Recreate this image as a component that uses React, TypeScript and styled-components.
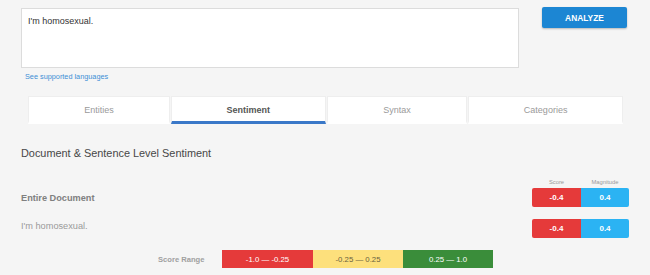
import React from "react";
import styled, { createGlobalStyle } from "styled-components";

const Global = createGlobalStyle`
  html, body { margin: 0; padding: 0; background: #f5f5f5; }
  body { font-family: "Liberation Sans", Arial, sans-serif; width: 650px; height: 275px; overflow: hidden; }
  * { box-sizing: border-box; }
`;

const Page = styled.div`
  display: flex;
  flex-direction: column;
  padding: 7px 21px 0 21px;
`;

const TopRow = styled.div`
  display: flex;
  align-items: flex-start;
`;

const InputCol = styled.div`
  display: flex;
  flex-direction: column;
  width: 498px;
  padding-top: 1px;
`;

const TextBox = styled.div`
  height: 60px;
  background: #fff;
  border: 1px solid #dcdcdc;
  padding: 7px 6px;
  font-size: 9px;
  color: #333;
`;

const Link = styled.a`
  font-size: 7.3px;
  color: #3d8fd6;
  margin: 4px 0 0 4px;
  text-decoration: none;
`;

const AnalyzeButton = styled.button`
  margin-left: 23px;
  width: 85px;
  height: 21px;
  border: none;
  border-radius: 2px;
  background: #1c86d3;
  color: #fff;
  font-family: "Liberation Sans", Arial, sans-serif;
  font-weight: bold;
  font-size: 8.4px;
  box-shadow: 0 1px 2px rgba(0, 0, 0, 0.25);
  padding: 0;
`;

const Tabs = styled.div`
  display: flex;
  margin: 15px 6px 0 7px;
  gap: 1px;
  height: 28px;
`;

const Tab = styled.div<{ $active?: boolean; $w: number }>`
  width: ${(p) => p.$w}px;
  background: #fff;
  border: 1px solid #eeeeee;
  border-bottom: 3px solid ${(p) => (p.$active ? "#3a78c8" : "#fff")};
  display: flex;
  align-items: center;
  justify-content: center;
  padding-top: 1px;
  font-size: 9px;
  color: ${(p) => (p.$active ? "#555" : "#9a9a9a")};
  font-weight: ${(p) => (p.$active ? "bold" : "normal")};
`;

const Heading = styled.div`
  margin-top: 23px;
  font-size: 10.9px;
  color: #474747;
  line-height: 13px;
`;

const ScoreHeader = styled.div`
  display: flex;
  justify-content: flex-end;
  margin-top: 18px;
  height: 9px;
`;

const HeaderCell = styled.div<{ $w: number }>`
  width: ${(p) => p.$w}px;
  text-align: center;
  font-size: 5.8px;
  color: #9a9a9a;
  line-height: 9px;
`;

const Row = styled.div<{ $mt: number }>`
  display: flex;
  justify-content: space-between;
  align-items: center;
  margin-top: ${(p) => p.$mt}px;
  height: 19px;
`;

const RowLabel = styled.div<{ $bold?: boolean; $dy?: number }>`
  font-size: 9.2px;
  font-weight: ${(p) => (p.$bold ? "bold" : "normal")};
  color: ${(p) => (p.$bold ? "#808080" : "#9a9a9a")};
  position: relative;
  top: ${(p) => p.$dy ?? 0}px;
`;

const Boxes = styled.div`
  display: flex;
  border-radius: 2px;
  overflow: hidden;
`;

const ScoreBox = styled.div<{ $bg: string; $w: number }>`
  width: ${(p) => p.$w}px;
  height: 19px;
  background: ${(p) => p.$bg};
  color: #fff;
  font-weight: bold;
  font-size: 8px;
  display: flex;
  align-items: center;
  justify-content: center;
`;

const RangeRow = styled.div`
  display: flex;
  align-items: center;
  margin-top: 12px;
  margin-left: 137px;
`;

const RangeLabel = styled.div`
  font-size: 7.6px;
  font-weight: bold;
  color: #a0a0a0;
  width: 64px;
`;

const RangeBar = styled.div<{ $bg: string; $fg: string; $w: number }>`
  width: ${(p) => p.$w}px;
  height: 18px;
  background: ${(p) => p.$bg};
  color: ${(p) => p.$fg};
  font-size: 7.8px;
  display: flex;
  align-items: center;
  justify-content: center;
`;

const RED = "#e53a3a";
const BLUE = "#2bb3f3";

export default function App() {
  return (
    <>
      <Global />
      <Page>
        <TopRow>
          <InputCol>
            <TextBox>I'm homosexual.</TextBox>
            <Link href="#">See supported languages</Link>
          </InputCol>
          <AnalyzeButton>ANALYZE</AnalyzeButton>
        </TopRow>
        <Tabs>
          <Tab $w={142}>Entities</Tab>
          <Tab $w={155} $active>Sentiment</Tab>
          <Tab $w={141}>Syntax</Tab>
          <Tab $w={155}>Categories</Tab>
        </Tabs>
        <Heading>Document &amp; Sentence Level Sentiment</Heading>
        <ScoreHeader>
          <HeaderCell $w={49}>Score</HeaderCell>
          <HeaderCell $w={48}>Magnitude</HeaderCell>
        </ScoreHeader>
        <Row $mt={1}>
          <RowLabel $bold>Entire Document</RowLabel>
          <Boxes>
            <ScoreBox $bg={RED} $w={49}>-0.4</ScoreBox>
            <ScoreBox $bg={BLUE} $w={48}>0.4</ScoreBox>
          </Boxes>
        </Row>
        <Row $mt={12}>
          <RowLabel $dy={-3}>I'm homosexual.</RowLabel>
          <Boxes>
            <ScoreBox $bg={RED} $w={49}>-0.4</ScoreBox>
            <ScoreBox $bg={BLUE} $w={48}>0.4</ScoreBox>
          </Boxes>
        </Row>
        <RangeRow>
          <RangeLabel>Score Range</RangeLabel>
          <RangeBar $bg={RED} $fg="#fff" $w={91}>-1.0 — -0.25</RangeBar>
          <RangeBar $bg="#fde07c" $fg="#6a6040" $w={90}>-0.25 — 0.25</RangeBar>
          <RangeBar $bg="#3a8d3a" $fg="#fff" $w={90}>0.25 — 1.0</RangeBar>
        </RangeRow>
      </Page>
    </>
  );
}
